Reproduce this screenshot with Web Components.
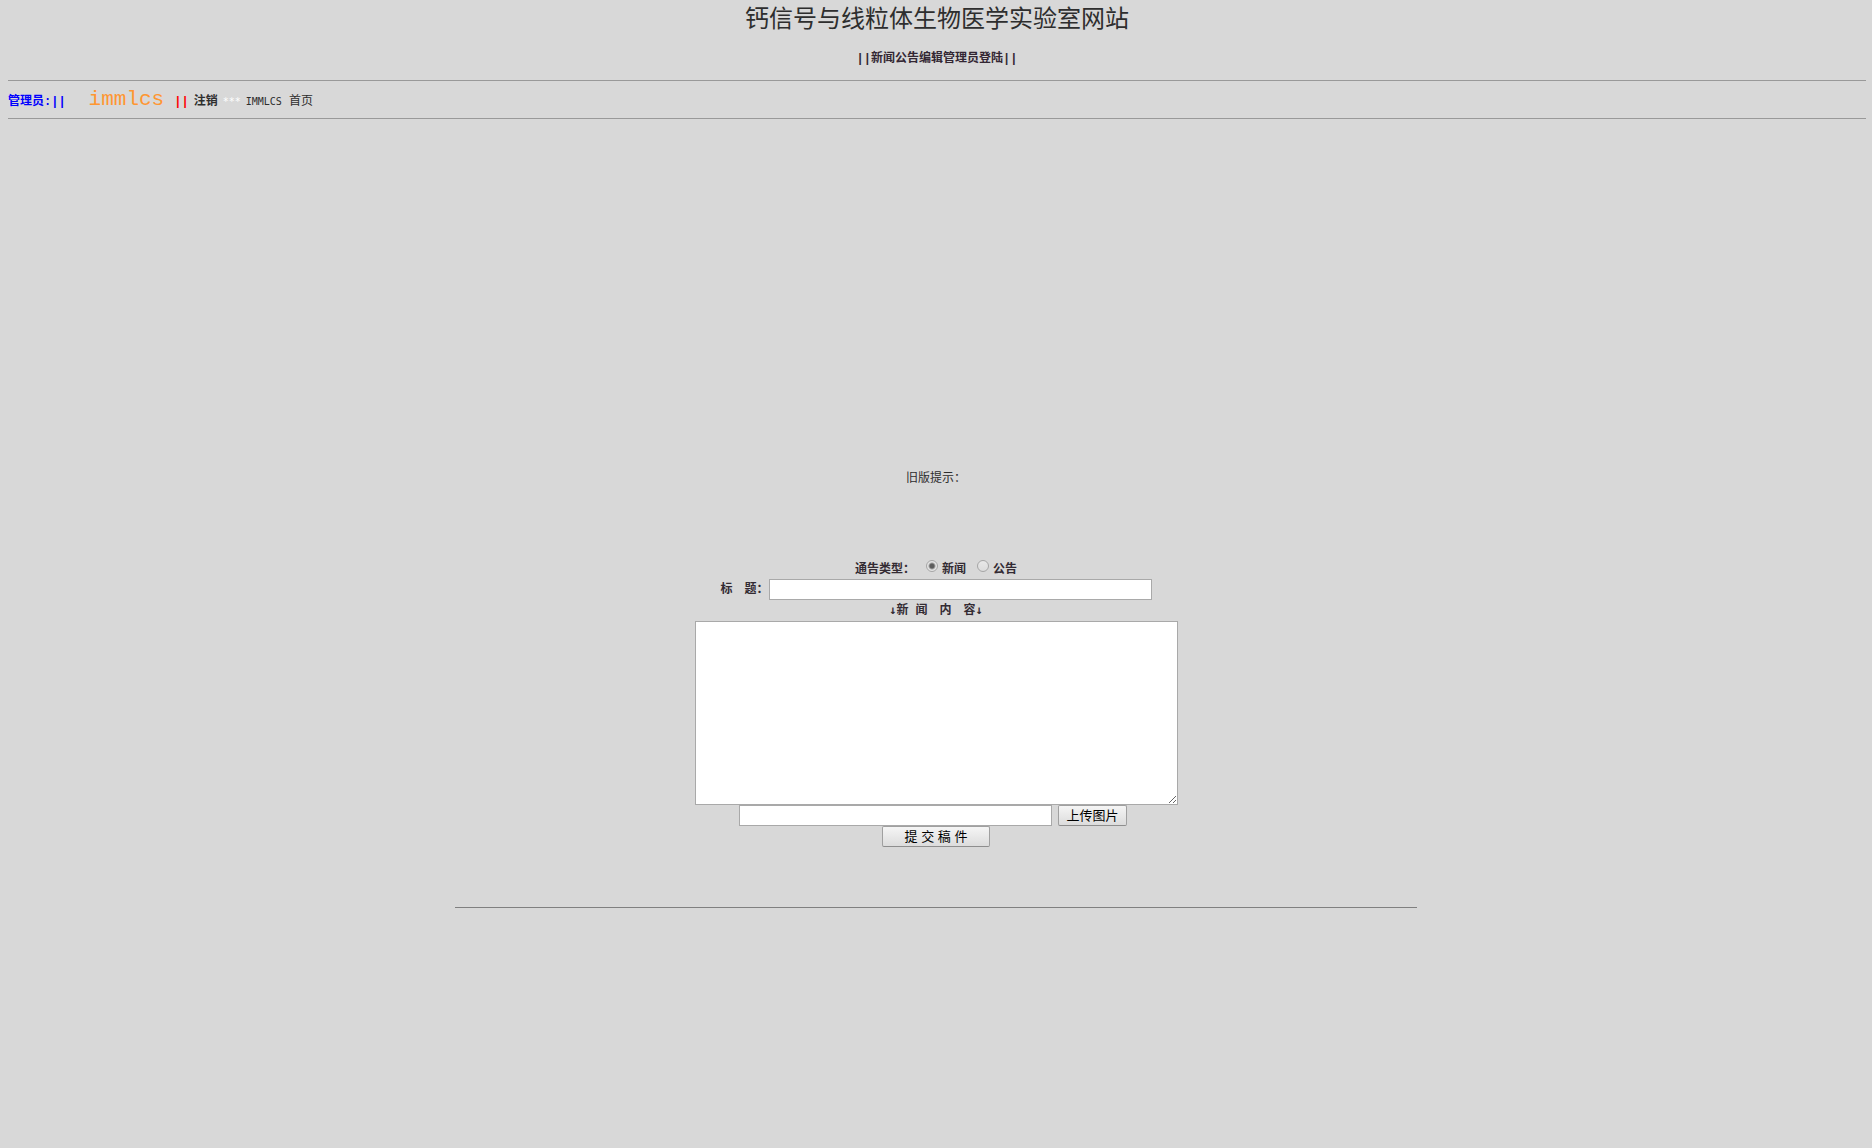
<!DOCTYPE html>
<html lang="zh-CN">
<head>
<meta charset="utf-8">
<title>钙信号与线粒体生物医学实验室网站</title>
<style>
html { background: #d8d8d8; }
body {
  margin: 0;
  color: #2e2e2e;
  font: 12px/20px "Liberation Mono", "Noto Sans CJK SC", monospace;
}
</style>
</head>
<body>
<site-header>
  <span slot="title">钙信号与线粒体生物医学实验室网站</span>
  <span slot="subtitle">||新闻公告编辑管理员登陆||</span>
</site-header>
<admin-bar user="immlcs"></admin-bar>
<main>
  <news-form>旧版提示&#xFF1A;</news-form>
</main>
<page-rule></page-rule>

<script>
function define(name, markup, setup) {
  const template = document.createElement('template');
  template.innerHTML = markup;
  customElements.define(name, class extends HTMLElement {
    constructor() {
      super();
      this.attachShadow({ mode: 'open' }).append(template.content.cloneNode(true));
    }
    connectedCallback() {
      if (setup) setup(this);
    }
  });
}

define('site-header', `
<style>
:host { display: block; margin: 0 6px 0 8px; border-bottom: 1px solid #999; text-align: center; }
h1 { margin: 0; padding-top: 6px; font-size: 24px; line-height: 30px; font-weight: 400; }
h2 { margin: 0; padding-top: 2px; font-size: 12px; line-height: 42px; font-weight: 700; color: #332733; }
</style>
<header>
  <h1><slot name="title"></slot></h1>
  <h2><slot name="subtitle"></slot></h2>
</header>`);

define('admin-bar', `
<style>
:host { display: block; margin: 0 6px 0 8px; border-bottom: 1px solid #999; }
nav { display: flex; align-items: baseline; gap: 5px; box-sizing: border-box; min-height: 37px; padding-top: 7px; line-height: 24px; }
a { color: inherit; text-decoration: none; }
.label { color: #00f; font-weight: 700; margin-right: 18px; }
.user { color: #ff9632; font-size: 21px; margin-right: 5px; }
.bars { color: #f00; font-weight: 700; }
.out { font-weight: 700; }
.stars { color: #fff; }
.stars, .latin { font-family: "DejaVu Sans Mono", monospace; font-size: 10px; }
</style>
<nav>
  <span class="label">管理员:||</span>
  <span class="user"></span>
  <span class="bars">||</span>
  <a class="out" href="#logout">注销</a>
  <span class="stars">***</span>
  <a href="#home"><span class="latin">IMMLCS</span> 首页</a>
</nav>`, el => {
  el.shadowRoot.querySelector('.user').textContent = el.getAttribute('user');
});

define('radio-option', `
<style>
:host { display: inline-flex; }
label { display: flex; gap: 4px; }
input {
  appearance: none; box-sizing: border-box; width: 12px; height: 12px; margin: 0;
  border: 1px solid #a6a6a6; border-radius: 50%;
  background: linear-gradient(#e8e8e8, #dcdcdc);
}
input:checked { background: radial-gradient(circle, #5c5c5c 0 2px, #e4e4e4 4px); }
</style>
<label><input type="radio" name="type"><span><slot></slot></span></label>`, el => {
  const input = el.shadowRoot.querySelector('input');
  input.checked = el.hasAttribute('checked');
  input.addEventListener('change', () => {
    for (const other of el.parentElement.querySelectorAll('radio-option'))
      if (other !== el) other.shadowRoot.querySelector('input').checked = false;
  });
});

define('push-button', `
<style>
:host { display: inline-flex; }
button {
  box-sizing: border-box; height: 21px; padding: 0 7px;
  border: 1px solid #a0a0a0; border-bottom-color: #8e8e8e; border-radius: 2px;
  background: linear-gradient(#f5f5f5, #dcdcdc);
  color: #000; font: 13px/18px "Liberation Sans", "Noto Sans CJK SC", sans-serif;
}
:host([wide]) button { width: 108px; }
</style>
<button type="button"><slot></slot></button>`);

define('news-form', `
<style>
:host { display: block; padding-top: 350px; }
form { display: flex; flex-direction: column; align-items: center; font-weight: 700; color: #332b33; }
.hint { font-weight: 400; margin-bottom: 71px; color: #2e2e2e; }
.row { display: flex; height: 21px; line-height: 23px; }
.type { height: 19px; gap: 11px; line-height: 20px; }
.file { gap: 6px; padding-right: 6px; }
.arrow { font-family: "DejaVu Sans Mono", monospace; }
input, textarea {
  box-sizing: border-box; margin: 0; padding: 2px; border: 1px solid #a9a9a9;
  background: #fff; font: 13px/16px "Liberation Mono", "Noto Sans CJK SC", monospace;
}
textarea { width: 483px; height: 184px; }
#title { width: 383px; }
#path { width: 313px; }
</style>
<form>
  <div class="hint"><slot></slot></div>
  <div class="row type" role="radiogroup" aria-labelledby="kind">
    <span id="kind">通告类型&#xFF1A;</span>
    <radio-option checked>新闻</radio-option>
    <radio-option>公告</radio-option>
  </div>
  <div class="row"><label for="title">标&#x3000;题&#xFF1A;</label><input id="title" type="text"></div>
  <label for="content"><span class="arrow">↓</span>新 闻&#x3000;内&#x3000;容<span class="arrow">↓</span></label>
  <textarea id="content"></textarea>
  <div class="row file">
    <input id="path" type="text" aria-labelledby="upload">
    <push-button id="upload">上传图片</push-button>
  </div>
  <push-button wide>提 交 稿 件</push-button>
</form>`);

define('page-rule', `
<style>
:host { display: block; padding-top: 60px; }
hr { width: 962px; max-width: 100%; margin: 0 auto; border: 0; border-top: 1px solid #808080; }
</style>
<hr>`);
</script>
</body>
</html>
